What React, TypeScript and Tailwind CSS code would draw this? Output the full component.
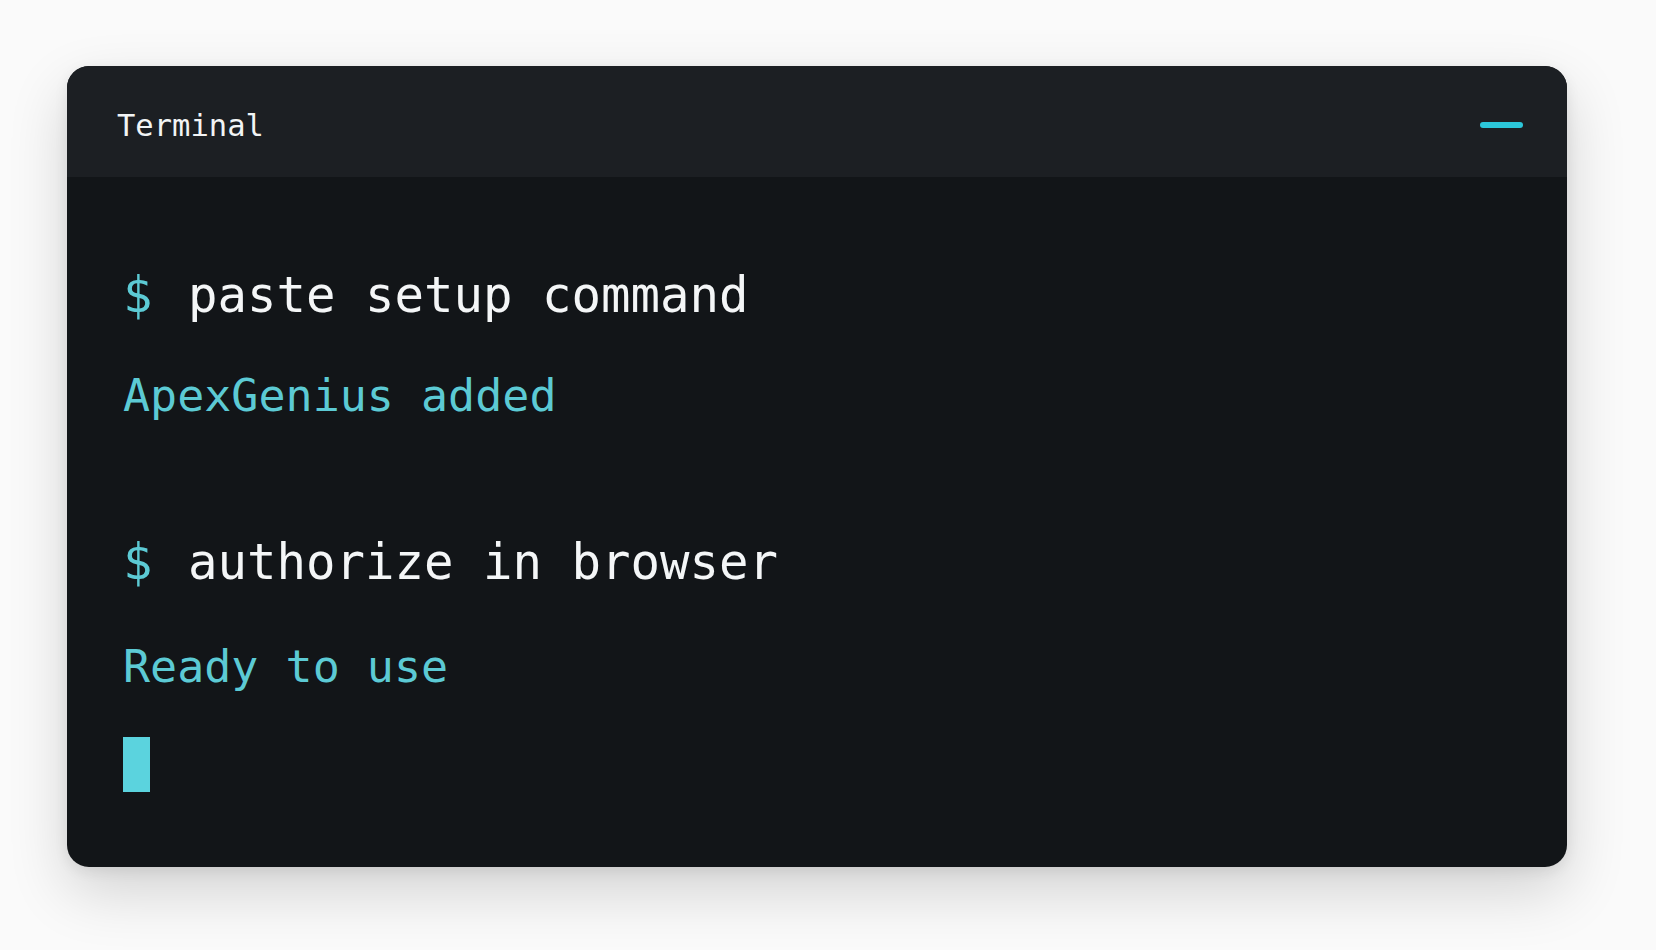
const mono = "font-['DejaVu_Sans_Mono','Liberation_Mono',monospace]"

const App = () => {
  return (
    <div className="min-h-[950px] w-full bg-[#fafafa] pt-[66px] pl-[67px]">
      <div className="flex h-[801px] w-[1500px] flex-col overflow-hidden rounded-[22px] bg-[#121518] shadow-[0_24px_60px_rgba(0,0,0,0.16),0_4px_14px_rgba(0,0,0,0.08)]">
        {/* Title bar */}
        <div className="flex h-[111px] shrink-0 items-center justify-between bg-[#1c1f23] pl-[50px] pr-[44px]">
          <span className={`${mono} text-[30.5px] leading-none text-[#f2f4f5] pt-[10px]`}>Terminal</span>
          <span className="mt-[6px] h-[6px] w-[43px] rounded-full bg-[#2cc7da]" />
        </div>

        {/* Body */}
        <div className={`${mono} flex flex-col pl-[56px] pt-[89px]`}>
          <div className="h-[60px] text-[49px] leading-[60px] text-[#f4f6f7]">
            <span className="text-[#5ccad4]">$</span>
            <span className="ml-[6px]"> paste setup command</span>
          </div>
          <div className="mt-[40px] h-[60px] text-[45px] leading-[60px] text-[#5ccad4]">
            ApexGenius added
          </div>
          <div className="mt-[107px] h-[60px] text-[49px] leading-[60px] text-[#f4f6f7]">
            <span className="text-[#5ccad4]">$</span>
            <span className="ml-[6px]"> authorize in browser</span>
          </div>
          <div className="mt-[44px] h-[60px] text-[45px] leading-[60px] text-[#5ccad4]">
            Ready to use
          </div>
          <div className="mt-[40px] h-[55px] w-[27px] bg-[#5bd3de]" />
        </div>
      </div>
    </div>
  )
}

export default App
